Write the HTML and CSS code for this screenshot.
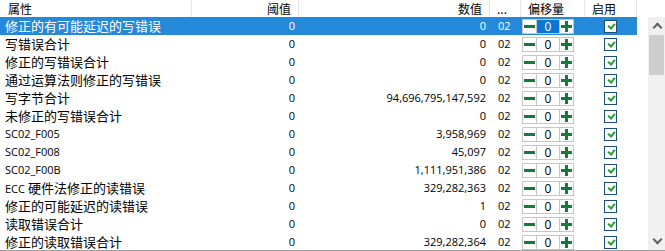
FILE: index.html
```html
<!DOCTYPE html>
<html lang="zh">
  <head>
    <meta charset="UTF-8" />
    <title>SMART 属性</title>
    <link rel="stylesheet" href="styles.css">
  </head>
  <body>
    <div class="view">
      <div class="list">
        <div class="row head">
          <div class="cell name">属性</div>
          <div class="cell num">阈值</div>
          <div class="cell num">数值</div>
          <div class="cell flag">...</div>
          <div class="cell offset">偏移量</div>
          <div class="cell enable">启用</div>
        </div>

        <div class="row selected">
          <div class="cell name">修正的有可能延迟的写错误</div>
          <div class="cell num latin">0</div>
          <div class="cell num latin">0</div>
          <div class="cell flag latin">02</div>
          <div class="cell offset"><span class="btn minus"></span><span class="field">0</span><span class="btn plus"></span></div>
          <div class="cell enable"><span class="check"></span></div>
        </div>
        <div class="row">
          <div class="cell name">写错误合计</div>
          <div class="cell num latin">0</div>
          <div class="cell num latin">0</div>
          <div class="cell flag latin">02</div>
          <div class="cell offset"><span class="btn minus"></span><span class="field">0</span><span class="btn plus"></span></div>
          <div class="cell enable"><span class="check"></span></div>
        </div>
        <div class="row">
          <div class="cell name">修正的写错误合计</div>
          <div class="cell num latin">0</div>
          <div class="cell num latin">0</div>
          <div class="cell flag latin">02</div>
          <div class="cell offset"><span class="btn minus"></span><span class="field">0</span><span class="btn plus"></span></div>
          <div class="cell enable"><span class="check"></span></div>
        </div>
        <div class="row">
          <div class="cell name">通过运算法则修正的写错误</div>
          <div class="cell num latin">0</div>
          <div class="cell num latin">0</div>
          <div class="cell flag latin">02</div>
          <div class="cell offset"><span class="btn minus"></span><span class="field">0</span><span class="btn plus"></span></div>
          <div class="cell enable"><span class="check"></span></div>
        </div>
        <div class="row">
          <div class="cell name">写字节合计</div>
          <div class="cell num latin">0</div>
          <div class="cell num latin">94,696,795,147,592</div>
          <div class="cell flag latin">02</div>
          <div class="cell offset"><span class="btn minus"></span><span class="field">0</span><span class="btn plus"></span></div>
          <div class="cell enable"><span class="check"></span></div>
        </div>
        <div class="row">
          <div class="cell name">未修正的写错误合计</div>
          <div class="cell num latin">0</div>
          <div class="cell num latin">0</div>
          <div class="cell flag latin">02</div>
          <div class="cell offset"><span class="btn minus"></span><span class="field">0</span><span class="btn plus"></span></div>
          <div class="cell enable"><span class="check"></span></div>
        </div>
        <div class="row">
          <div class="cell name latin">SC02_F005</div>
          <div class="cell num latin">0</div>
          <div class="cell num latin">3,958,969</div>
          <div class="cell flag latin">02</div>
          <div class="cell offset"><span class="btn minus"></span><span class="field">0</span><span class="btn plus"></span></div>
          <div class="cell enable"><span class="check"></span></div>
        </div>
        <div class="row">
          <div class="cell name latin">SC02_F008</div>
          <div class="cell num latin">0</div>
          <div class="cell num latin">45,097</div>
          <div class="cell flag latin">02</div>
          <div class="cell offset"><span class="btn minus"></span><span class="field">0</span><span class="btn plus"></span></div>
          <div class="cell enable"><span class="check"></span></div>
        </div>
        <div class="row">
          <div class="cell name latin">SC02_F00B</div>
          <div class="cell num latin">0</div>
          <div class="cell num latin">1,111,951,386</div>
          <div class="cell flag latin">02</div>
          <div class="cell offset"><span class="btn minus"></span><span class="field">0</span><span class="btn plus"></span></div>
          <div class="cell enable"><span class="check"></span></div>
        </div>
        <div class="row">
          <div class="cell name"><span class="latin">ECC</span> 硬件法修正的读错误</div>
          <div class="cell num latin">0</div>
          <div class="cell num latin">329,282,363</div>
          <div class="cell flag latin">02</div>
          <div class="cell offset"><span class="btn minus"></span><span class="field">0</span><span class="btn plus"></span></div>
          <div class="cell enable"><span class="check"></span></div>
        </div>
        <div class="row">
          <div class="cell name">修正的可能延迟的读错误</div>
          <div class="cell num latin">0</div>
          <div class="cell num latin">1</div>
          <div class="cell flag latin">02</div>
          <div class="cell offset"><span class="btn minus"></span><span class="field">0</span><span class="btn plus"></span></div>
          <div class="cell enable"><span class="check"></span></div>
        </div>
        <div class="row">
          <div class="cell name">读取错误合计</div>
          <div class="cell num latin">0</div>
          <div class="cell num latin">0</div>
          <div class="cell flag latin">02</div>
          <div class="cell offset"><span class="btn minus"></span><span class="field">0</span><span class="btn plus"></span></div>
          <div class="cell enable"><span class="check"></span></div>
        </div>
        <div class="row">
          <div class="cell name">修正的读取错误合计</div>
          <div class="cell num latin">0</div>
          <div class="cell num latin">329,282,364</div>
          <div class="cell flag latin">02</div>
          <div class="cell offset"><span class="btn minus"></span><span class="field">0</span><span class="btn plus"></span></div>
          <div class="cell enable"><span class="check"></span></div>
        </div>
      </div>

      <div class="scrollbar">
        <div class="arrow up"></div>
        <div class="track"><div class="thumb"></div></div>
        <div class="arrow down"></div>
      </div>
    </div>
  </body>
</html>
```

FILE: styles.css
```css
* {
  margin: 0;
  padding: 0;
  box-sizing: border-box;
}

body {
  background: #ffffff;
  color: #000000;
  font-family: "Noto Sans CJK SC", "Noto Sans", sans-serif;
  font-size: 13px;
  overflow: hidden;
}

.view {
  display: flex;
  width: 665px;
  height: 251px;
  border-bottom: 1px solid #a0a0a0;
  overflow: hidden;
}

.list {
  width: 648px;
  flex: none;
}

.row {
  display: grid;
  grid-template-columns: 192px 107px 191px 31px 64px 52px;
  width: 637px;
  height: 18px;
  align-items: center;
}

.row.head {
  height: 17px;
  font-size: 12px;
}

.cell {
  white-space: nowrap;
  overflow: hidden;
  line-height: 18px;
  height: 100%;
  display: flex;
  align-items: center;
}

.cell.name {
  display: block;
  padding-left: 5px;
}

.head .cell {
  border-right: 1px solid #e5e5e5;
  padding-left: 7px;
  line-height: 17px;
}

.head .name {
  padding-left: 8px;
}

.head .num {
  padding-right: 7px;
}

.latin {
  font-family: "Open Sans", "Noto Sans", sans-serif;
  font-size: 11px;
}

.num {
  justify-content: flex-end;
  padding-right: 4px;
}

.flag {
  padding-left: 8px;
}

.offset {
  padding-left: 1px;
}

.enable {
  padding-left: 19px;
}

.selected {
  background: #2589d9;
  color: #ffffff;
}

/* offset spinner */
.btn {
  position: relative;
  width: 15px;
  height: 15px;
  border: 1px solid #c6c6c6;
  background: #ffffff;
}

.btn::before,
.plus::after {
  content: "";
  position: absolute;
  left: 1px;
  top: 5px;
  width: 11px;
  height: 3px;
  background: #137a3c;
}

.plus::after {
  left: 5px;
  top: 1px;
  width: 3px;
  height: 11px;
}

.field {
  width: 22px;
  height: 15px;
  border-top: 1px solid #c6c6c6;
  border-bottom: 1px solid #c6c6c6;
  background: #ffffff;
  color: #000000;
  font-family: "Open Sans", "Noto Sans", sans-serif;
  font-size: 12px;
  line-height: 13px;
  text-align: center;
}

.selected .field {
  background: #0a74d7;
  color: #ffffff;
}

/* enable checkbox */
.check {
  position: relative;
  width: 13px;
  height: 13px;
  border: 1px solid #1d4e7d;
  background: #ffffff;
}

.check::after {
  content: "";
  position: absolute;
  left: 3px;
  top: 2px;
  width: 5px;
  height: 3px;
  border-left: 2px solid #21a12c;
  border-bottom: 2px solid #21a12c;
  transform: rotate(-50deg);
}

/* vertical scrollbar */
.scrollbar {
  width: 17px;
  margin-top: 17px;
  background: #f0f0f0;
  display: flex;
  flex-direction: column;
}

.arrow {
  position: relative;
  height: 17px;
  flex: none;
}

.arrow::before {
  content: "";
  position: absolute;
  left: 6px;
  width: 5px;
  height: 5px;
  border-left: 2px solid #606060;
  border-top: 2px solid #606060;
}

.up::before {
  top: 7px;
  transform: rotate(45deg);
}

.down::before {
  top: 3px;
  transform: rotate(225deg);
}

.track {
  flex: 1;
  padding: 1px 1px 0;
}

.thumb {
  height: 40px;
  background: #cdcdcd;
}
```
